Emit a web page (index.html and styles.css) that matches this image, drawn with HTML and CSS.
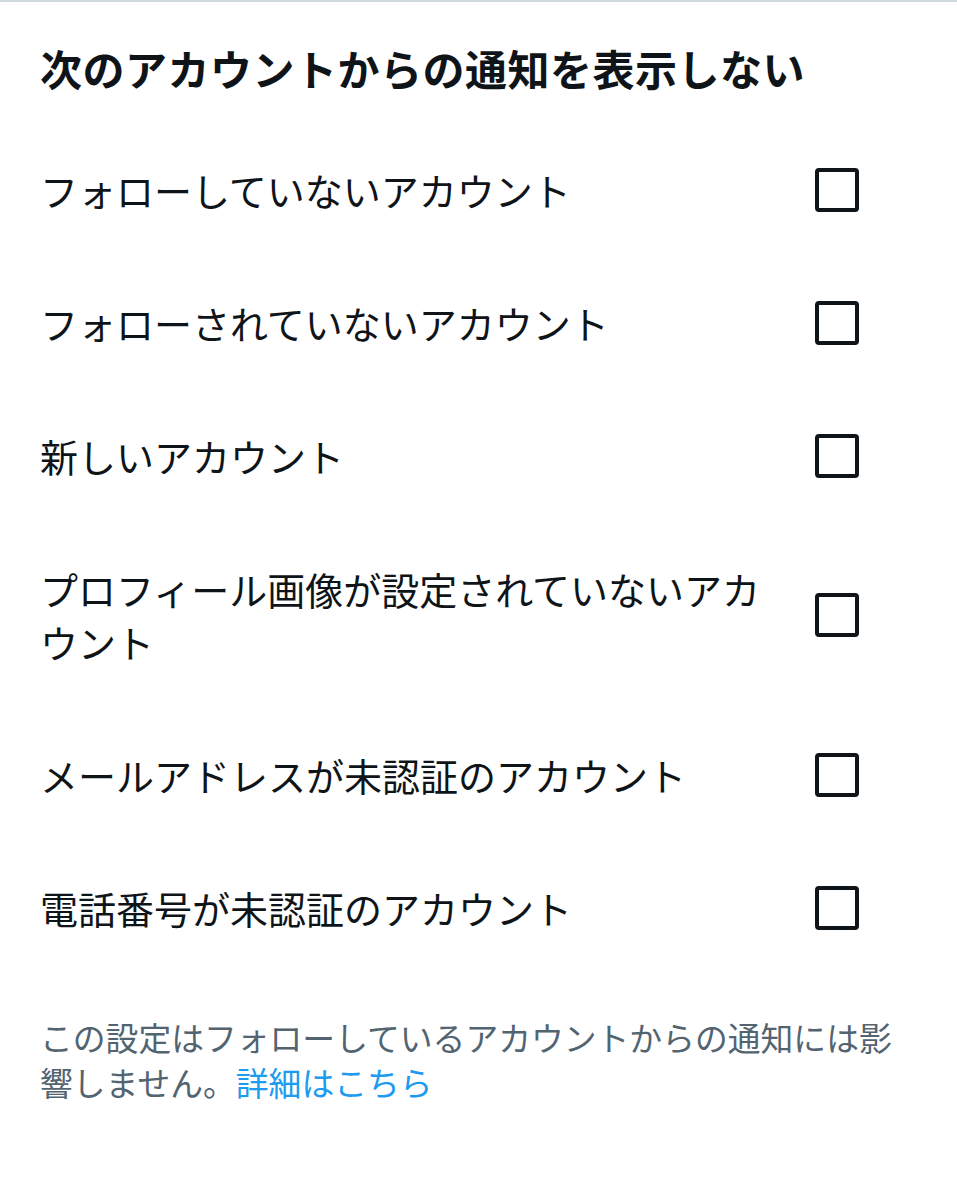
FILE: index.html
```html
<!DOCTYPE html>
<html lang="ja">
<head>
    <meta charset="UTF-8">
    <meta name="viewport" content="width=device-width, initial-scale=1.0">
    <title>通知のフィルター</title>
    <link rel="stylesheet" href="styles.css">
</head>
<body>
    <div class="top-line"></div>

    <h1 class="title">次のアカウントからの通知を表示しない</h1>

    <div class="options">
        <label class="option">
            <span class="option-text">フォローしていないアカウント</span>
            <span class="checkbox"></span>
        </label>
        <label class="option">
            <span class="option-text">フォローされていないアカウント</span>
            <span class="checkbox"></span>
        </label>
        <label class="option">
            <span class="option-text">新しいアカウント</span>
            <span class="checkbox"></span>
        </label>
        <label class="option">
            <span class="option-text">プロフィール画像が設定されていないアカウント</span>
            <span class="checkbox"></span>
        </label>
        <label class="option">
            <span class="option-text">メールアドレスが未認証のアカウント</span>
            <span class="checkbox"></span>
        </label>
        <label class="option">
            <span class="option-text">電話番号が未認証のアカウント</span>
            <span class="checkbox"></span>
        </label>
    </div>

    <p class="note">この設定はフォローしているアカウントからの通知には影響しません。<a href="#" class="note-link">詳細はこちら</a></p>
</body>
</html>
```

FILE: styles.css
```css
body {
    margin: 0;
    padding: 0;
    background: #ffffff;
    color: #0f1419;
    font-family: "Noto Sans CJK JP", "Noto Sans", sans-serif;
}
.top-line {
    height: 2px;
    background: #cfd9de;
}
.title {
    margin: 0;
    padding: 40px 40px 29px;
    font-size: 42px;
    line-height: 52px;
    font-weight: bold;
    letter-spacing: 0.5px;
}
.option {
    display: flex;
    align-items: center;
    padding: 40px 98px 40px 40px;
    cursor: pointer;
}
.option-text {
    flex: 1;
    padding-right: 40px;
    font-size: 38px;
    line-height: 53px;
}
.checkbox {
    width: 36px;
    height: 36px;
    border: 4px solid #0f1419;
    border-radius: 4px;
    flex-shrink: 0;
}
.note {
    margin: 40px 0 0;
    padding: 0 40px;
    color: #536471;
    font-size: 32.8px;
    line-height: 45px;
}
.note-link {
    color: #1d9bf0;
    text-decoration: none;
}
```
